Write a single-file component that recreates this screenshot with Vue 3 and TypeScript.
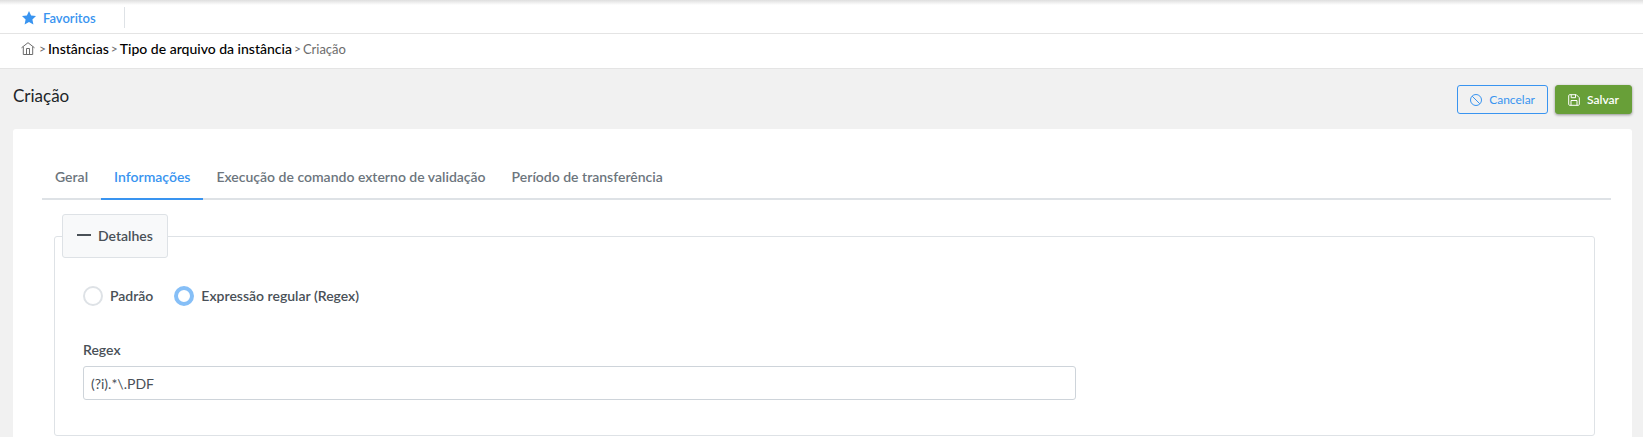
<script setup lang="ts">
import { ref } from 'vue'

interface Tab {
  id: string
  label: string
}

const tabs: Tab[] = [
  { id: 'geral', label: 'Geral' },
  { id: 'informacoes', label: 'Informações' },
  { id: 'execucao', label: 'Execução de comando externo de validação' },
  { id: 'periodo', label: 'Período de transferência' },
]

const activeTab = ref<string>('informacoes')
const mode = ref<'padrao' | 'regex'>('regex')
const regex = ref<string>('(?i).*\\.PDF')
const open = ref<boolean>(true)
</script>

<template>
  <div class="page">
    <header class="favorites">
      <a href="#" class="fav-link">
        <svg class="star" viewBox="0 0 14 14" aria-hidden="true">
          <path d="M7 0l2.100 4.500 4.900.6-3.600 3.400 1 5L7 11.100l-4.400 2.400 1-5L0 5.100l4.900-.6z" />
        </svg>
        <span>Favoritos</span>
      </a>
    </header>

    <nav class="breadcrumb" aria-label="Navegação">
      <a href="#" class="home" aria-label="Início">
        <svg viewBox="0 0 14 14" aria-hidden="true">
          <path d="M.5 5.800L7 .7l6.500 5.100M2.300 4.700v7.800h9.400V4.700M5.500 12.500V6.500h3v6" />
        </svg>
      </a>
      <span class="sep">&gt;</span>
      <a href="#" class="crumb">Instâncias</a>
      <span class="sep">&gt;</span>
      <a href="#" class="crumb">Tipo de arquivo da instância</a>
      <span class="sep">&gt;</span>
      <span class="current">Criação</span>
    </nav>

    <main class="content">
      <div class="heading">
        <h1>Criação</h1>
        <div class="actions">
          <button type="button" class="btn cancel">
            <svg viewBox="0 0 12 12" aria-hidden="true">
              <circle cx="6" cy="6" r="5.500" />
              <path d="M2.200 2.200l7.600 7.600" />
            </svg>
            <span>Cancelar</span>
          </button>
          <button type="button" class="btn save">
            <svg viewBox="0 0 12 12" aria-hidden="true">
              <path d="M1.700.7h6.600l3 3v6.600a1 1 0 0 1-1 1H1.700a1 1 0 0 1-1-1V1.700a1 1 0 0 1 1-1zM3.200.7v3h4.300v-3M3 11.300V6.500h6v4.800" />
            </svg>
            <span>Salvar</span>
          </button>
        </div>
      </div>

      <section class="card">
        <div class="tabs" role="tablist">
          <button
            v-for="tab in tabs"
            :key="tab.id"
            type="button"
            role="tab"
            class="tab"
            :class="{ active: tab.id === activeTab }"
            :aria-selected="tab.id === activeTab"
            @click="activeTab = tab.id"
          >
            {{ tab.label }}
          </button>
        </div>

        <fieldset class="details">
          <legend>
            <button type="button" class="toggle" :aria-expanded="open" @click="open = !open">
              <svg viewBox="0 0 14 14" aria-hidden="true">
                <path d="M0 7h14" />
                <path v-if="!open" d="M7 0v14" />
              </svg>
              <span>Detalhes</span>
            </button>
          </legend>
          <div v-show="open" class="body">
            <div class="radios">
              <label class="radio">
                <input v-model="mode" type="radio" name="mode" value="padrao" />
                <span>Padrão</span>
              </label>
              <label class="radio">
                <input v-model="mode" type="radio" name="mode" value="regex" />
                <span>Expressão regular (Regex)</span>
              </label>
            </div>
            <div class="field">
              <label for="regex">Regex</label>
              <input id="regex" v-model="regex" type="text" />
            </div>
          </div>
        </fieldset>
      </section>
    </main>
  </div>
</template>

<style>
body {
  margin: 0;
  background: #f1f1f1;
}
</style>

<style scoped>
.page,
.page * {
  box-sizing: border-box;
}

.page {
  display: flex;
  flex-direction: column;
  min-height: 100vh;
  font-family: Lato, "Open Sans", sans-serif;
  font-size: 14px;
  line-height: 18px;
  color: #495057;
}

a {
  text-decoration: none;
}

button {
  font-family: inherit;
  cursor: pointer;
}

svg {
  display: block;
  flex: none;
  width: 14px;
  height: 14px;
  fill: none;
  stroke: currentColor;
}

.favorites {
  display: flex;
  align-items: center;
  height: 34px;
  padding: 2px 22px 0;
  border-bottom: 1px solid #e4e4e4;
  background: linear-gradient(#dedede, #ffffff 5px);
}

.fav-link {
  display: flex;
  align-items: center;
  gap: 7px;
  height: 21px;
  padding-right: 28px;
  border-right: 1px solid #dee2e6;
  color: #3994f0;
  font-size: 13px;
  font-weight: 600;
}

.star {
  fill: currentColor;
  stroke: none;
}

.breadcrumb {
  display: flex;
  align-items: center;
  gap: 2px;
  height: 35px;
  padding: 0 21px 4px;
  border-bottom: 1px solid #e4e4e4;
  background: #ffffff;
}

.home,
.sep,
.current {
  color: #6c6c6c;
}

.sep {
  font-size: 12px;
}

.home {
  margin-right: 2px;
}

.current {
  font-size: 13px;
}

.crumb {
  color: #000000;
  font-weight: 500;
}

.content {
  display: flex;
  flex: 1;
  flex-direction: column;
  padding: 16px 11px 0 13px;
}

.heading {
  display: flex;
  justify-content: space-between;
  align-items: flex-start;
  height: 44px;
}

h1 {
  margin: 0;
  color: #212529;
  font-size: 17px;
  font-weight: 400;
  line-height: 22px;
}

.actions {
  display: flex;
  gap: 7px;
}

.btn {
  display: flex;
  align-items: center;
  gap: 7px;
  height: 29px;
  padding: 0 12px;
  border: 1px solid #3994f0;
  border-radius: 3px;
  font-size: 12px;
}

.btn svg {
  width: 12px;
  height: 12px;
}

.cancel {
  background: transparent;
  color: #3994f0;
}

.save {
  border-color: #689f38;
  background: #689f38;
  color: #ffffff;
  font-weight: 600;
  box-shadow: 0 1px 3px rgba(0, 0, 0, 0.4);
}

.card {
  flex: 1;
  padding: 42px 21px 0 29px;
  border-radius: 3px 3px 0 0;
  background: #ffffff;
}

.tabs {
  display: flex;
  border-bottom: 2px solid #dee2e6;
}

.tab {
  height: 29px;
  margin-bottom: -2px;
  padding: 0 13px 15px;
  border: 0;
  border-bottom: 2px solid transparent;
  background: transparent;
  color: #6c757d;
  font-size: 14px;
  font-weight: 600;
  line-height: 12px;
}

.tab.active {
  border-bottom-color: #3994f0;
  color: #3994f0;
}

.details {
  min-width: 0;
  margin: 14px 16px 0 12px;
  padding: 0 7px;
  border: 1px solid #dee2e6;
  border-radius: 3px;
}

legend {
  padding: 0;
}

.toggle {
  display: flex;
  align-items: center;
  gap: 7px;
  height: 44px;
  padding: 0 14px 2px;
  border: 1px solid #dee2e6;
  border-radius: 3px;
  background: #f8f9fa;
  color: #495057;
  font-size: 14px;
  font-weight: 600;
}

.toggle svg {
  stroke-width: 2px;
}

.body {
  padding: 28px 0 35px 21px;
}

.radios {
  display: flex;
  gap: 21px;
}

.radio {
  display: flex;
  align-items: center;
  gap: 7px;
  height: 20px;
  font-weight: 600;
}

.radio input {
  appearance: none;
  width: 20px;
  height: 20px;
  margin: 0;
  border: 2px solid #dee2e6;
  border-radius: 50%;
  background: #ffffff;
}

.radio input:checked {
  border: 4px solid #86bff7;
}

.field {
  display: flex;
  flex-direction: column;
  gap: 7px;
  width: 66%;
  margin-top: 35px;
}

.field label {
  font-weight: 600;
}

.field input {
  height: 34px;
  padding: 0 7px;
  border: 1px solid #ced4da;
  border-radius: 3px;
  background: #ffffff;
  color: #495057;
  font-family: inherit;
  font-size: 14px;
}
</style>
